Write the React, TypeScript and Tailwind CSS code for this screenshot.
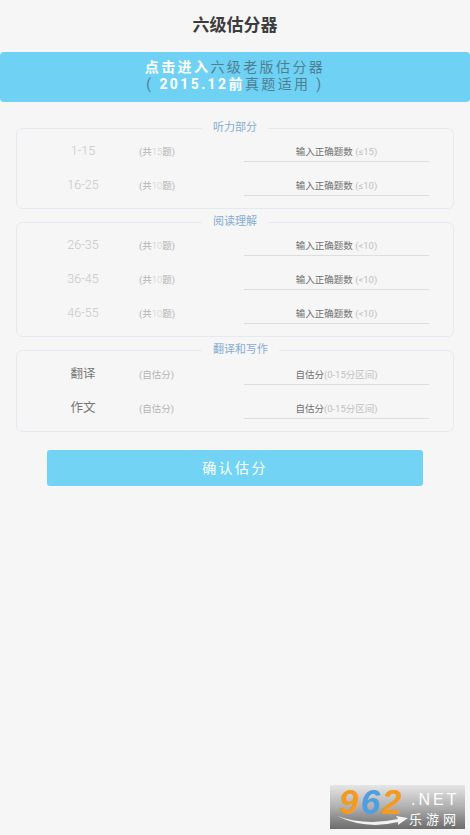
import React from 'react'

const FONT = 'font-["Roboto","Noto_Sans_CJK_SC",sans-serif]'

interface IRow {
  label: string
  isText?: boolean
  count: React.ReactNode
  hint: string
  limit: string
}

const Row = ({ label, isText, count, hint, limit }: IRow) => {
  return (
    <div className="flex h-[34px] items-start">
      <div
        className={`mt-[4px] w-[122px] pl-[10px] text-center leading-[16px] ${
          isText ? 'text-[12.5px] text-[#777]' : 'text-[12.5px] font-light text-[#c6c6c6]'
        }`}
      >
        {label}
      </div>
      <div className="mt-[7px] w-[105px] text-[9.5px] leading-[12px] text-[#b4b4b4]">{count}</div>
      <div className="h-[23px] w-[185px] border-b border-[#dedede] pt-[7px] text-center text-[9.5px] leading-[12px] text-[#707070]">
        {hint}
        <span className="text-[#c0c0c0]">{limit}</span>
      </div>
    </div>
  )
}

const Section = ({ title, children }: { title: string; children: React.ReactNode }) => {
  return (
    <fieldset className="mx-[16px] rounded-[6px] border border-[#e4eaf0]">
      <legend className="ml-[185px] px-[11px] text-[11px] leading-[14px] text-[#86add3]">{title}</legend>
      {children}
    </fieldset>
  )
}

const Count = ({ n }: { n: string }) => {
  return (
    <>
      <span>(共</span>
      <span className="font-light text-[#cfcfcf]">{n}</span>
      <span>题)</span>
    </>
  )
}

const Watermark = () => {
  return (
    <div className="absolute right-[5px] bottom-[6px] h-[44px] w-[135px] bg-gradient-to-b from-[#e6e6e6] via-[#b0b0b0] to-[#6c6c6c]">
      <div className="absolute top-[0px] left-[9px] font-['Liberation_Sans',sans-serif] text-[35px] leading-[34px] font-bold tracking-[2px] italic">
        <span className="text-[#f39a24]">9</span>
        <span className="text-[#4f9fe0]">6</span>
        <span className="text-[#f39a24]">2</span>
      </div>
      <div className="absolute top-[7px] left-[81px] font-['Liberation_Sans',sans-serif] text-[16px] leading-[16px] tracking-[3px] text-white">
        .NET
      </div>
      <div className="absolute top-[27px] left-[79px] text-[13px] leading-[16px] tracking-[4px] text-white">乐游网</div>
      <svg className="absolute top-[28px] left-[6px]" width="72" height="16" viewBox="0 0 72 16">
        <path d="M1 3 Q30 13 62 6 L60 3 L72 5 L62 12 L62 9 Q30 17 1 3 Z" fill="#f2f2f2" />
      </svg>
    </div>
  )
}

const App = () => {
  return (
    <div className={`relative min-h-[835px] bg-[#f6f6f6] ${FONT}`}>
      <h1 className="pt-[15px] text-center text-[17px] leading-[20px] font-bold text-[#3c3c3c]">六级估分器</h1>

      <div className="mt-[17px] h-[50px] rounded-[4px] bg-[#6fd2f4] pt-[7px] text-center text-[14px] leading-[17px] tracking-[2.4px] text-[#4d7f93]">
        <div>
          <span className="font-bold text-white">点击进入</span>六级老版估分器
        </div>
        <div>
          ( <span className="font-bold text-white">2015.12前</span>真题适用 )
        </div>
      </div>

      <div className="mt-[19px] flex flex-col gap-[6px]">
        <Section title="听力部分">
          <div className="pt-[4px] pb-[1px]">
            <Row label="1-15" count={<Count n="15" />} hint="输入正确题数" limit=" (≤15)" />
            <Row label="16-25" count={<Count n="10" />} hint="输入正确题数" limit=" (≤10)" />
          </div>
        </Section>
        <Section title="阅读理解">
          <div className="pt-[4px] pb-[1px]">
            <Row label="26-35" count={<Count n="10" />} hint="输入正确题数" limit=" (<10)" />
            <Row label="36-45" count={<Count n="10" />} hint="输入正确题数" limit=" (<10)" />
            <Row label="46-55" count={<Count n="10" />} hint="输入正确题数" limit=" (<10)" />
          </div>
        </Section>
        <Section title="翻译和写作">
          <div className="pt-[5px] pb-[1px]">
            <Row label="翻译" isText count="(自估分)" hint="自估分" limit="(0-15分区间)" />
            <Row label="作文" isText count="(自估分)" hint="自估分" limit="(0-15分区间)" />
          </div>
        </Section>
      </div>

      <button className="mx-auto mt-[18px] block h-[36px] w-[376px] rounded-[3px] bg-[#72d3f5] text-[14px] tracking-[2.4px] text-white">
        确认估分
      </button>

      <Watermark />
    </div>
  )
}

export default App
